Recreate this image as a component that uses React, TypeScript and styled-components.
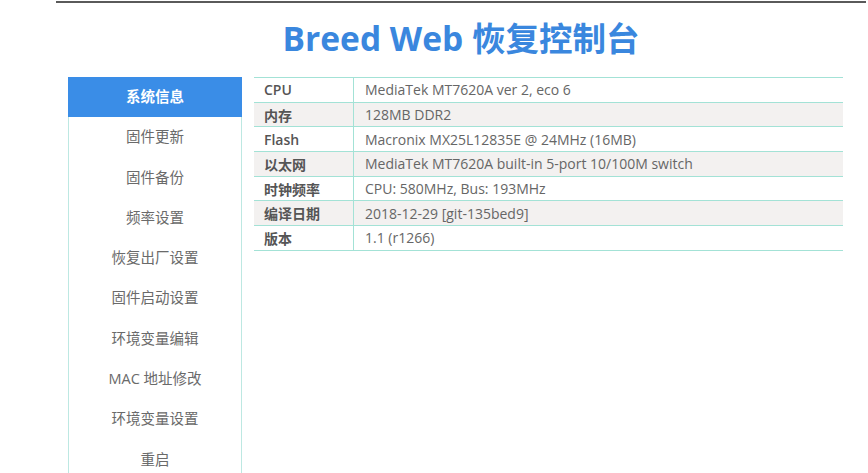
import React from "react";
import styled, { createGlobalStyle } from "styled-components";

const GlobalStyle = createGlobalStyle`
  html, body { margin: 0; padding: 0; background: #ffffff; overflow: hidden; }
  body {
    font-family: "Open Sans", "Noto Sans CJK SC", sans-serif;
    color: #666666;
  }
`;

const Page = styled.div`
  margin: 1px 0 0 56px;
  width: 810px;
  border-top: 2px solid #5a5a5a;
`;

const Title = styled.h1`
  margin: 15px 0 19px;
  line-height: 40px;
  font-size: 33.5px;
  font-weight: 700;
  text-align: center;
  color: #3a87de;
  font-family: "Open Sans", "Noto Sans CJK SC", sans-serif;
`;

const Main = styled.div`
  display: flex;
  align-items: flex-start;
  gap: 12px;
  padding-left: 12px;
`;

const Sidebar = styled.ul`
  list-style: none;
  margin: 0;
  padding: 0;
  width: 172px;
  border-left: 1px solid #bde8e2;
  border-right: 1px solid #bde8e2;
  flex: none;
`;

const NavItem = styled.li<{ $active?: boolean }>`
  height: 40.3px;
  line-height: 40.3px;
  text-align: center;
  font-size: 14.5px;
  margin: ${(p) => (p.$active ? "0 -1px" : "0")};
  background: ${(p) => (p.$active ? "#3a8de7" : "transparent")};
  color: ${(p) => (p.$active ? "#ffffff" : "#6a6a6a")};
  font-weight: ${(p) => (p.$active ? 700 : 400)};
`;

const InfoTable = styled.table`
  width: 589px;
  border-collapse: collapse;
  font-size: 14px;
`;

const Row = styled.tr<{ $shaded: boolean }>`
  background: ${(p) => (p.$shaded ? "#f3f1f0" : "#ffffff")};
  border-top: 1px solid #a3e2d6;
  border-bottom: 1px solid #a3e2d6;
`;

const Label = styled.td`
  width: 89px;
  height: 23.7px;
  padding: 0 0 0 10px;
  border-right: 1px solid #a3e2d6;
  font-weight: 600;
  color: #555555;
  white-space: nowrap;
`;

const Value = styled.td`
  height: 23.7px;
  padding: 0 0 0 11px;
  color: #666666;
  white-space: nowrap;
`;

const navItems = [
  "系统信息",
  "固件更新",
  "固件备份",
  "频率设置",
  "恢复出厂设置",
  "固件启动设置",
  "环境变量编辑",
  "MAC 地址修改",
  "环境变量设置",
  "重启",
];

const info: [string, string][] = [
  ["CPU", "MediaTek MT7620A ver 2, eco 6"],
  ["内存", "128MB DDR2"],
  ["Flash", "Macronix MX25L12835E @ 24MHz (16MB)"],
  ["以太网", "MediaTek MT7620A built-in 5-port 10/100M switch"],
  ["时钟频率", "CPU: 580MHz, Bus: 193MHz"],
  ["编译日期", "2018-12-29 [git-135bed9]"],
  ["版本", "1.1 (r1266)"],
];

export default function App() {
  return (
    <>
      <GlobalStyle />
      <Page>
        <Title>Breed Web 恢复控制台</Title>
        <Main>
          <Sidebar>
            {navItems.map((item, i) => (
              <NavItem key={item} $active={i === 0}>
                {item}
              </NavItem>
            ))}
          </Sidebar>
          <InfoTable>
            <tbody>
              {info.map(([k, v], i) => (
                <Row key={k} $shaded={i % 2 === 1}>
                  <Label>{k}</Label>
                  <Value>{v}</Value>
                </Row>
              ))}
            </tbody>
          </InfoTable>
        </Main>
      </Page>
    </>
  );
}
